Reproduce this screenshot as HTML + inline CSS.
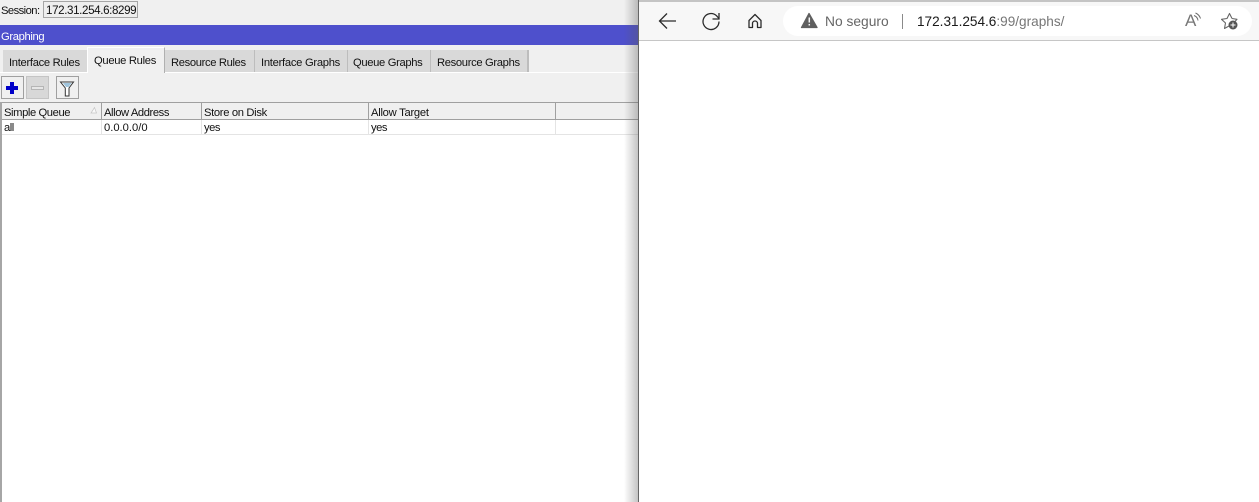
<!DOCTYPE html>
<html><head><meta charset="utf-8"><style>
html,body{margin:0;padding:0;background:#fff;width:1259px;height:502px;overflow:hidden;font-family:"Liberation Sans",sans-serif;}
.a{position:absolute;box-sizing:border-box;}
.t{position:absolute;white-space:nowrap;font-size:11.2px;line-height:14px;color:#111;letter-spacing:-.33px;}
.tab{position:absolute;top:50px;height:22px;background:#d9d9d9;border-right:2px solid #bdbdbd;}
.btn{position:absolute;top:76px;width:23px;height:23px;box-sizing:border-box;border:1px solid #a0a0a0;background:#f0f0f0;}
.v{position:absolute;width:1px;}
</style></head><body>
<div class="a" style="left:0;top:0;width:639px;height:502px;background:#fff;overflow:hidden">
<div class="a" style="left:0;top:0;width:639px;height:120px;background:#f0f0f0"></div>
<div class="t" style="left:1px;top:4px;letter-spacing:-.55px">Session:</div>
<div class="a" style="left:43px;top:1px;width:95px;height:17px;border:1px solid #a5a5a5;background:#eee"></div>
<div class="t" style="left:46px;top:4px;font-size:11.6px;letter-spacing:-.38px">172.31.254.6:8299</div>
<div class="a" style="left:0;top:25px;width:639px;height:20px;background:#4e50cc"></div>
<div class="t" style="left:1px;top:30px;color:#fff;letter-spacing:-.35px">Graphing</div>

<div class="a" style="left:0;top:72px;width:639px;height:1px;background:#fff"></div>
<div class="tab" style="left:3px;width:84px;border-right:0"></div>
<div class="a" style="left:87px;top:47px;width:78px;height:26px;background:#f0f0f0;border-top:1px solid #fff;border-left:1px solid #fff;border-right:1px solid #b0b0b0"></div>
<div class="tab" style="left:165px;width:89px"></div>
<div class="tab" style="left:255px;width:92px"></div>
<div class="tab" style="left:348px;width:82px"></div>
<div class="tab" style="left:431px;width:96px"></div>
<div class="t" style="left:9px;top:56px;letter-spacing:-.3px">Interface Rules</div>
<div class="t" style="left:94px;top:54px;letter-spacing:-.3px">Queue Rules</div>
<div class="t" style="left:171px;top:56px;letter-spacing:-.35px">Resource Rules</div>
<div class="t" style="left:261px;top:56px;letter-spacing:-.27px">Interface Graphs</div>
<div class="t" style="left:353px;top:56px">Queue Graphs</div>
<div class="t" style="left:437px;top:56px">Resource Graphs</div>

<div class="btn" style="left:1px"></div>
<div class="a" style="left:6px;top:86px;width:12px;height:4px;background:#0000c8"></div>
<div class="a" style="left:10px;top:82px;width:4px;height:12px;background:#0000c8"></div>
<div class="btn" style="left:26px;background:#d8d8d8;border-color:#c4c4c4"></div>
<div class="a" style="left:31px;top:86px;width:13px;height:4px;background:#e6e6e6;border:1px solid #b5b5b5"></div>
<div class="btn" style="left:56px"></div>
<svg class="a" style="left:56px;top:76px" width="23" height="23" viewBox="0 0 23 23"><path d="M4.500 6H17.500L13 12V20H9.300V12Z" fill="#fff" stroke="#333" stroke-width="1"/><path d="M7 7H15.500L12.500 11H10Z" fill="#9fc4dc"/></svg>

<div class="a" style="left:1px;top:102px;width:638px;height:1px;background:#a0a0a0"></div>
<div class="a" style="left:1px;top:119px;width:638px;height:1px;background:#a0a0a0"></div>
<div class="a" style="left:1px;top:134px;width:638px;height:1px;background:#e4e4e4"></div>
<div class="a" style="left:0;top:102px;width:2px;height:400px;background:#a6a6a6"></div>
<div class="v" style="left:101px;top:103px;height:16px;background:#a0a0a0"></div>
<div class="v" style="left:201px;top:103px;height:16px;background:#a0a0a0"></div>
<div class="v" style="left:368px;top:103px;height:16px;background:#a0a0a0"></div>
<div class="v" style="left:555px;top:103px;height:16px;background:#a0a0a0"></div>
<div class="v" style="left:101px;top:120px;height:14px;background:#e4e4e4"></div>
<div class="v" style="left:201px;top:120px;height:14px;background:#e4e4e4"></div>
<div class="v" style="left:368px;top:120px;height:14px;background:#e4e4e4"></div>
<div class="v" style="left:555px;top:120px;height:14px;background:#e4e4e4"></div>
<div class="t" style="left:4px;top:106px;letter-spacing:-.4px">Simple Queue</div>
<svg class="a" style="left:90px;top:106px" width="8" height="8" viewBox="0 0 8 8"><path d="M1 7H6.500L4.500 1.500Z" fill="#fafafa" stroke="#c4c4c4" stroke-width=".7"/></svg>
<div class="t" style="left:104px;top:106px;letter-spacing:-.4px">Allow Address</div>
<div class="t" style="left:204px;top:106px">Store on Disk</div>
<div class="t" style="left:371px;top:106px;letter-spacing:-.25px">Allow Target</div>
<div class="t" style="left:4px;top:121px;letter-spacing:-.5px">all</div>
<div class="t" style="left:104px;top:121px;letter-spacing:0">0.0.0.0/0</div>
<div class="t" style="left:204px;top:121px;letter-spacing:-.5px">yes</div>
<div class="t" style="left:371px;top:121px;letter-spacing:-.5px">yes</div>
<div class="a" style="left:624px;top:0;width:15px;height:502px;background:linear-gradient(90deg,rgba(90,90,90,0),rgba(90,90,90,.38))"></div>
</div>

<div class="a" style="left:638px;top:0;width:1px;height:502px;background:#666"></div>
<div class="a" style="left:639px;top:0;width:620px;height:502px;background:#fff"></div>
<div class="a" style="left:639px;top:0;width:620px;height:40px;background:#f7f7f7"></div>
<div class="a" style="left:639px;top:0;width:620px;height:2px;background:#c4c4c4"></div>
<div class="a" style="left:639px;top:40px;width:620px;height:1px;background:#c6c6c6"></div>
<div class="a" style="left:783px;top:6px;width:469px;height:30px;border-radius:15px;background:#fff"></div>

<svg class="a" style="left:639px;top:0" width="620" height="40" viewBox="0 0 620 40" fill="none" stroke="#2b2b2b" stroke-width="1.300">
<path d="M20.500 21H37M28 13.500L20.500 21L28 28.500"/>
<path d="M80 21.500A8 8 0 1 1 77.500 15.700L80 18.500"/><path d="M80 13V19H73.500"/>
<path d="M110 20.500L116 14.500L122 20.500V27.500H118.500V23.500A2.500 2.500 0 0 0 113.500 23.500V27.500H110Z" stroke-linejoin="round"/>
<path d="M170 13.500L162.500 27.500H178Z" fill="#5f5f5f" stroke="#5f5f5f" stroke-linejoin="round"/>
<path d="M170.300 17.500V22.500M170.300 24V25.500" stroke="#f7f7f7" stroke-width="1.500"/>
<path d="M263.500 14V29" stroke="#8a8a8a" stroke-width="1"/>
<path d="M555 15.500A6 6 0 0 1 559 20.500M556.500 13A9 9 0 0 1 561.500 18.500" stroke="#6a6a6a" stroke-width="1"/>
<path d="M593 18.500L590.500 13.500L588 18.500L582.500 19.300L586.500 23L585.500 28.500L590 26M593 18.500L598 19.300L596 21.500" stroke="#666" stroke-width="1.100" stroke-linejoin="round"/>
<circle cx="594" cy="25" r="4.500" fill="#555" stroke="none"/>
<path d="M591.500 25H596.500M594 22.500V27.500" stroke="#fff" stroke-width="1"/>
</svg>

<div class="t" style="left:825px;top:13px;font-size:13.8px;line-height:17px;color:#666;letter-spacing:0">No seguro</div>
<div class="t" style="left:917px;top:13px;font-size:13.6px;line-height:17px;color:#767676;letter-spacing:0"><span style="color:#1a1a1a">172.31.254.6</span>:99/graphs/</div>
<div class="t" style="left:1185px;top:12px;font-size:17px;line-height:18px;color:#777;letter-spacing:0">A</div>
</body></html>
